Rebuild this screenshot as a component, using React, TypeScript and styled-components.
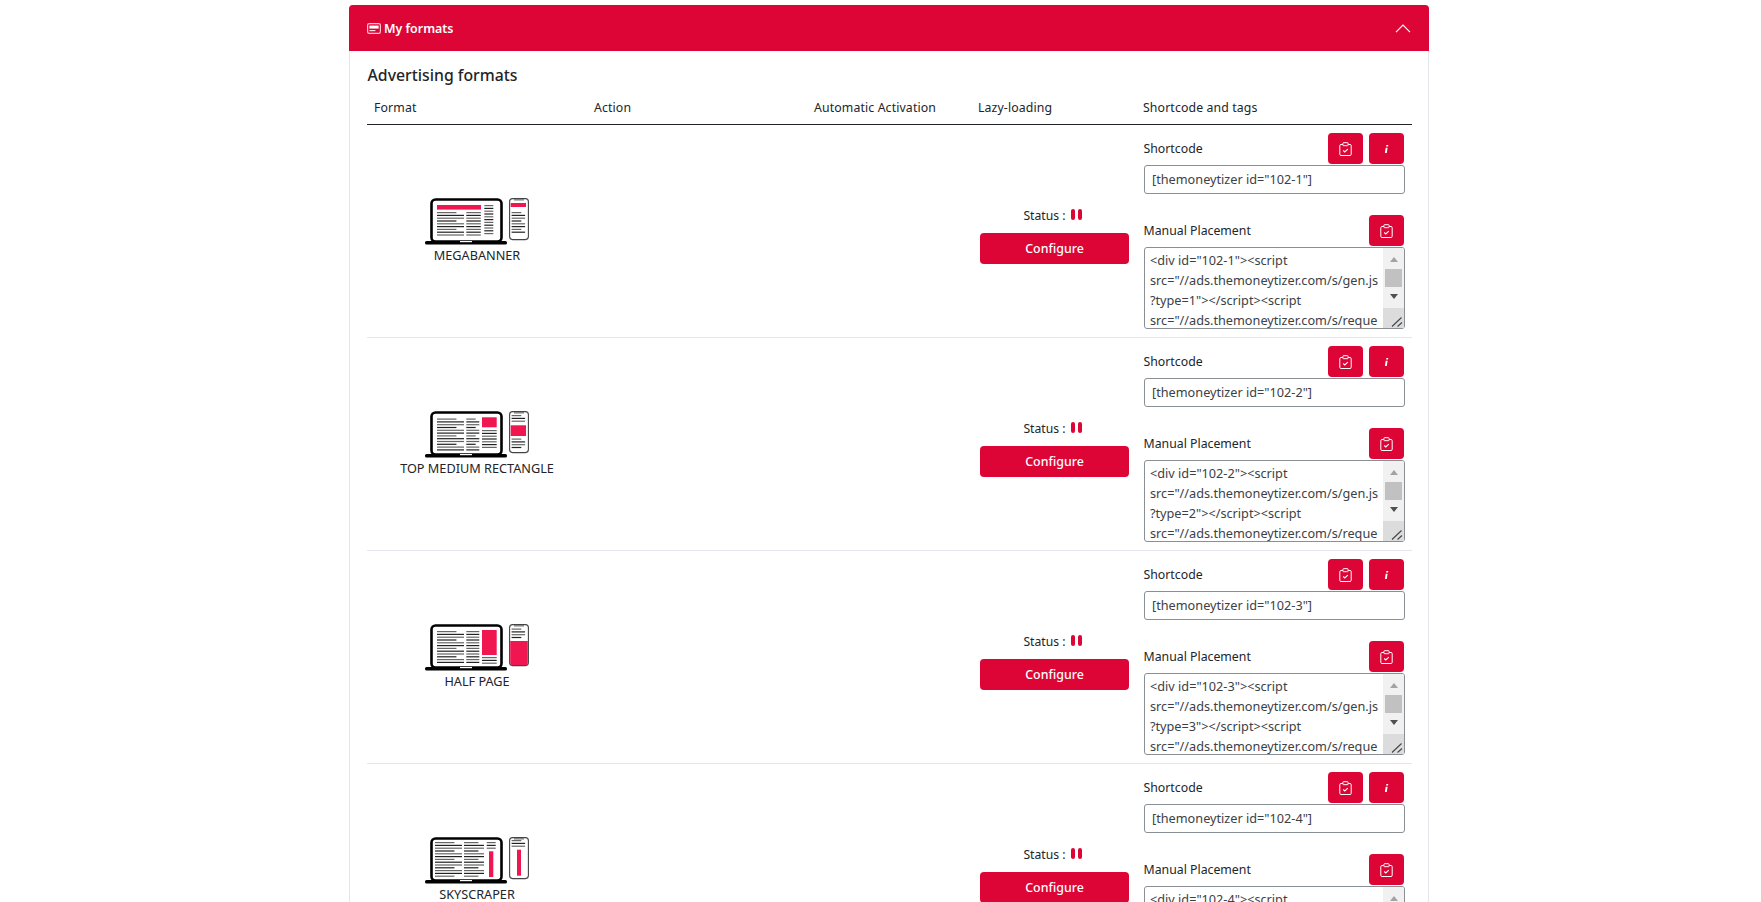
import React from "react";
import styled, { createGlobalStyle } from "styled-components";

const RED = "#dc0536";
const FONT = `"Noto Sans", "Open Sans", Arial, sans-serif`;

const Global = createGlobalStyle`
  html, body { margin: 0; padding: 0; background: #fff; }
  body { font-family: ${FONT}; color: #212529; overflow: hidden; }
`;

const Page = styled.div`
  height: 902px;
  overflow: hidden;
  padding: 5px 0 0 349px;
  box-sizing: border-box;
`;

const Card = styled.section`
  width: 1080px;
  border: 1px solid #e3e6ea;
  border-top: 0;
  border-radius: 4px 4px 0 0;
  box-sizing: border-box;
`;

const CardHeader = styled.header`
  height: 46px;
  margin: 0 -1px;
  padding: 0 18px 0 18px;
  background: ${RED};
  border-radius: 4px 4px 0 0;
  display: flex;
  align-items: center;
  color: #fff;
  font-size: 12.4px;
  font-weight: 600;
`;

const HeaderTitle = styled.span`
  margin-left: 3px;
  flex: 1;
`;

const CardBody = styled.div`
  padding: 13px 16px 0 17px;
`;

const Title = styled.h2`
  margin: 0 0 5px;
  padding-left: 0.5px;
  font-size: 15.8px;
  line-height: 22px;
  font-weight: 500;
`;

const gridColumns = "220px 220px 164px 165px 276px";

const HeadRow = styled.div`
  display: grid;
  grid-template-columns: ${gridColumns};
  height: 34px;
  align-items: center;
  box-sizing: border-box;
  border-bottom: 1px solid #212529;
`;

const HeadCell = styled.div`
  padding: 0 7px;
  font-size: 12.3px;
  letter-spacing: 0.12px;
`;

const Row = styled.div`
  display: grid;
  grid-template-columns: ${gridColumns};
  height: 213px;
  box-sizing: border-box;
  border-bottom: 1px solid #e3e6ea;
`;

const FormatCell = styled.div`
  display: flex;
  flex-direction: column;
  align-items: center;
  justify-content: center;
  padding-bottom: 2px;
`;

const Caption = styled.div`
  font-size: 12.7px;
  line-height: 16px;
  margin-top: 2px;
`;

const LazyCell = styled.div`
  display: flex;
  flex-direction: column;
  align-items: stretch;
  justify-content: center;
  padding: 0 7px 0 9px;
`;

const Status = styled.div`
  display: flex;
  justify-content: center;
  align-items: center;
  height: 34px;
  padding-right: 4px;
  font-size: 12.2px;
`;

const PauseBars = styled.span`
  display: inline-flex;
  gap: 3px;
  margin-left: 5px;
  margin-top: -3px;
`;

const PauseBar = styled.i`
  display: block;
  width: 4px;
  height: 11px;
  border-radius: 2px;
  background: ${RED};
`;

const ConfigureButton = styled.button`
  height: 31px;
  border: 0;
  border-radius: 4px;
  background: ${RED};
  color: #fff;
  font-family: ${FONT};
  font-size: 12.4px;
  font-weight: 500;
  padding: 0;
`;

const ShortcodeCell = styled.div`
  padding: 8px 7.5px 0 7.5px;
`;

const FieldHead = styled.div<{ $top?: number }>`
  display: flex;
  align-items: center;
  gap: 6px;
  height: 31px;
  margin-top: ${(p) => p.$top ?? 0}px;
  margin-right: 1px;
  margin-bottom: 1px;
`;

const FieldLabel = styled.label`
  flex: 1;
  font-size: 12.3px;
`;

const IconButton = styled.button`
  width: 35px;
  height: 31px;
  padding: 0;
  border: 0;
  border-radius: 4px;
  background: ${RED};
  color: #fff;
  display: flex;
  align-items: center;
  justify-content: center;
`;

const CodeInput = styled.input`
  display: block;
  width: 261px;
  height: 29px;
  margin-left: 0.5px;
  box-sizing: border-box;
  padding: 0 7px 2px;
  border: 1px solid #8a8f94;
  border-radius: 3px;
  font-family: ${FONT};
  font-size: 12.7px;
  color: #3c4146;
  outline: none;
`;

const AreaWrap = styled.div`
  position: relative;
  width: 261px;
  height: 82px;
  margin-left: 0.5px;
`;

const CodeArea = styled.textarea`
  display: block;
  width: 100%;
  height: 100%;
  box-sizing: border-box;
  padding: 2px 25px 0 5px;
  border: 1px solid #8a8f94;
  border-radius: 3px;
  font-family: ${FONT};
  font-size: 12.7px;
  line-height: 20px;
  color: #3c4146;
  outline: none;
  resize: none;
  overflow: hidden;
  overflow-wrap: anywhere;
`;

const ScrollRail = styled.div`
  position: absolute;
  top: 1px;
  right: 1px;
  bottom: 1px;
  width: 21px;
  background: #f1f1f1;
  border-radius: 0 2px 2px 0;
  display: flex;
  flex-direction: column;
  align-items: center;
`;

const ArrowUp = styled.i`
  display: block;
  width: 0;
  height: 0;
  margin-top: 9px;
  border-left: 4.5px solid transparent;
  border-right: 4.5px solid transparent;
  border-bottom: 5px solid #a3a3a3;
`;

const Thumb = styled.i`
  display: block;
  width: 17px;
  height: 18px;
  margin: 7px 0;
  background: #c1c1c1;
`;

const ArrowDown = styled.i`
  display: block;
  width: 0;
  height: 0;
  border-left: 4.5px solid transparent;
  border-right: 4.5px solid transparent;
  border-top: 5px solid #505050;
`;

const ResizeCorner = styled.div`
  margin-top: auto;
  width: 21px;
  height: 20px;
  background: #dcdcdc;
  display: flex;
  align-items: flex-end;
  justify-content: flex-end;
`;

const Line: React.FC<{ x: number; y: number; w: number; dark?: boolean }> = ({ x, y, w, dark }) => (
  <rect x={x} y={y} width={w} height={1.2} fill={dark ? "#222" : "#666"} />
);

function lineCol(x: number, w: number, y0: number, y1: number, step = 2.8, jag = false) {
  const out: React.ReactNode[] = [];
  let i = 0;
  for (let y = y0; y <= y1; y += step, i++) {
    const width = jag && i % 3 === 0 ? w * 0.72 : w;
    out.push(<Line key={`${x}-${y}`} x={x} y={y} w={width} dark={i % 2 === 1} />);
  }
  return out;
}

const PINK = "#f0164f";
type Kind = "mega" | "medium" | "half" | "sky";

const FormatArt: React.FC<{ kind: Kind }> = ({ kind }) => (
  <svg width="105" height="47" viewBox="0 0 105 47" fill="none">
    <rect x="6.5" y="1.5" width="70" height="42" rx="4" stroke="#000" strokeWidth="2.6" />
    <rect x="0" y="43" width="82" height="3.6" rx="1.6" fill="#000" />
    <rect x="35" y="43" width="12" height="1.2" fill="#fff" />
    <rect x="84.6" y="0.6" width="18.8" height="41" rx="3" stroke="#444" strokeWidth="1.1" />
    <rect x="89" y="1.4" width="10" height="1" fill="#555" />
    {kind === "mega" && (
      <>
        <rect x="12" y="7" width="44" height="4.6" fill={PINK} />
        {lineCol(12, 27, 14, 37, 2.8, true)}
        {lineCol(41.3, 14.5, 14, 37)}
        {lineCol(59.3, 9, 7, 37)}
        <rect x="85.7" y="5" width="15.3" height="4" fill={PINK} />
        {lineCol(86.6, 13.5, 14, 36, 2.8, true)}
      </>
    )}
    {kind === "medium" && (
      <>
        {lineCol(12, 27, 7.5, 39, 2.8, true)}
        {lineCol(41.3, 13, 7.5, 39, 2.8, true)}
        <rect x="57" y="6.3" width="14.7" height="10" fill={PINK} />
        {lineCol(57, 14.7, 19, 37)}
        {lineCol(86.6, 13.5, 4, 11, 2.8, true)}
        <rect x="85.7" y="14.3" width="15.3" height="10.7" fill={PINK} />
        {lineCol(86.6, 13.5, 27.5, 37, 2.8, true)}
      </>
    )}
    {kind === "half" && (
      <>
        {lineCol(12, 27, 7, 39, 2.8, true)}
        {lineCol(41.3, 13, 7, 39, 2.8)}
        <rect x="57" y="6" width="14.7" height="25" fill={PINK} />
        {lineCol(57, 14.7, 33, 39)}
        {lineCol(86.6, 13.5, 4.5, 14, 2.8, true)}
        <path d="M85.2 17H102.8V38.5a2.6 2.6 0 0 1-2.6 2.6H87.8a2.6 2.6 0 0 1-2.6-2.6Z" fill={PINK} />
      </>
    )}
    {kind === "sky" && (
      <>
        {lineCol(10, 27, 5, 39, 2.8, true)}
        {lineCol(39, 20, 5, 39, 2.8, true)}
        {lineCol(61.7, 9, 5, 12, 2.8)}
        <rect x="64" y="14.3" width="4.3" height="25.7" fill={PINK} />
        {lineCol(86.6, 13.5, 3, 9, 2.8, true)}
        <rect x="92" y="12.7" width="4" height="26" fill={PINK} />
      </>
    )}
  </svg>
);

const InfoGlyph = () => (
  <svg width="5" height="8" viewBox="0 0 5 8" fill="#fff">
    <path d="M2.4 0h1.9l-.3 1.5H2.1ZM1.7 2.7h1.9L2.8 8H.9Z" />
  </svg>
);

const ClipGlyph = () => (
  <svg width="13" height="14" viewBox="0 0 13 14" fill="none" stroke="#fff">
    <path d="M3.8 2.5H2A1.2 1.2 0 0 0 .8 3.7v8.6A1.2 1.2 0 0 0 2 13.5h9a1.2 1.2 0 0 0 1.2-1.2V3.7A1.2 1.2 0 0 0 11 2.500H9.200" strokeWidth="1" />
    <rect x="3.900" y="0.700" width="5.200" height="3" rx="0.600" strokeWidth="1" />
    <path d="M4.200 8.500 5.800 10l3-2.800" strokeWidth="1.100" />
  </svg>
);

const AdIcon = () => (
  <svg width="14" height="11" viewBox="0 0 14 11" fill="none">
    <rect x="0.6" y="0.6" width="12.8" height="9.8" rx="1.6" stroke="#ffc4d2" strokeWidth="1.2" />
    <rect x="2.4" y="2.6" width="9.2" height="3" fill="#fff" />
    <rect x="2.4" y="7" width="6" height="1.2" fill="#ffd9e2" />
  </svg>
);

const ResizeGrip = () => (
  <svg width="13" height="12" viewBox="0 0 13 12" fill="none">
    <path d="M1 10.5 10.5 1.5M6.5 10.5 11 6.5" stroke="#444" strokeWidth="1.1" />
  </svg>
);

const rows: { id: number; kind: Kind; name: string }[] = [
  { id: 1, kind: "mega", name: "MEGABANNER" },
  { id: 2, kind: "medium", name: "TOP MEDIUM RECTANGLE" },
  { id: 3, kind: "half", name: "HALF PAGE" },
  { id: 4, kind: "sky", name: "SKYSCRAPER" },
];

export default function App() {
  return (
    <Page>
      <Global />
      <Card>
        <CardHeader>
          <AdIcon />
          <HeaderTitle>My formats</HeaderTitle>
          <svg width="16" height="9" viewBox="0 0 16 9" fill="none">
            <path d="M1 8.2 8 1l7 7.2" stroke="#fff" strokeWidth="1.1" />
          </svg>
        </CardHeader>
        <CardBody>
          <Title>Advertising formats</Title>
          <HeadRow>
            <HeadCell>Format</HeadCell>
            <HeadCell>Action</HeadCell>
            <HeadCell>Automatic Activation</HeadCell>
            <HeadCell>Lazy-loading</HeadCell>
            <HeadCell>Shortcode and tags</HeadCell>
          </HeadRow>
          {rows.map((r) => (
            <Row key={r.id}>
              <FormatCell>
                <FormatArt kind={r.kind} />
                <Caption>{r.name}</Caption>
              </FormatCell>
              <div />
              <div />
              <LazyCell>
                <Status>
                  Status :
                  <PauseBars>
                    <PauseBar />
                    <PauseBar />
                  </PauseBars>
                </Status>
                <ConfigureButton>Configure</ConfigureButton>
              </LazyCell>
              <ShortcodeCell>
                <FieldHead>
                  <FieldLabel>Shortcode</FieldLabel>
                  <IconButton aria-label="Copy shortcode"><ClipGlyph /></IconButton>
                  <IconButton aria-label="Information"><InfoGlyph /></IconButton>
                </FieldHead>
                <CodeInput readOnly value={`[themoneytizer id="102-${r.id}"]`} />
                <FieldHead $top={21}>
                  <FieldLabel>Manual Placement</FieldLabel>
                  <IconButton aria-label="Copy tags"><ClipGlyph /></IconButton>
                </FieldHead>
                <AreaWrap>
                  <CodeArea
                    readOnly
                    value={`<div id="102-${r.id}"><script src="//ads.themoneytizer.com/s/gen.js?type=${r.id}"></script><script src="//ads.themoneytizer.com/s/requestform.js?siteId=102&formatId=${r.id}"></script></div>`}
                  />
                  <ScrollRail>
                    <ArrowUp />
                    <Thumb />
                    <ArrowDown />
                    <ResizeCorner><ResizeGrip /></ResizeCorner>
                  </ScrollRail>
                </AreaWrap>
              </ShortcodeCell>
            </Row>
          ))}
        </CardBody>
      </Card>
    </Page>
  );
}
